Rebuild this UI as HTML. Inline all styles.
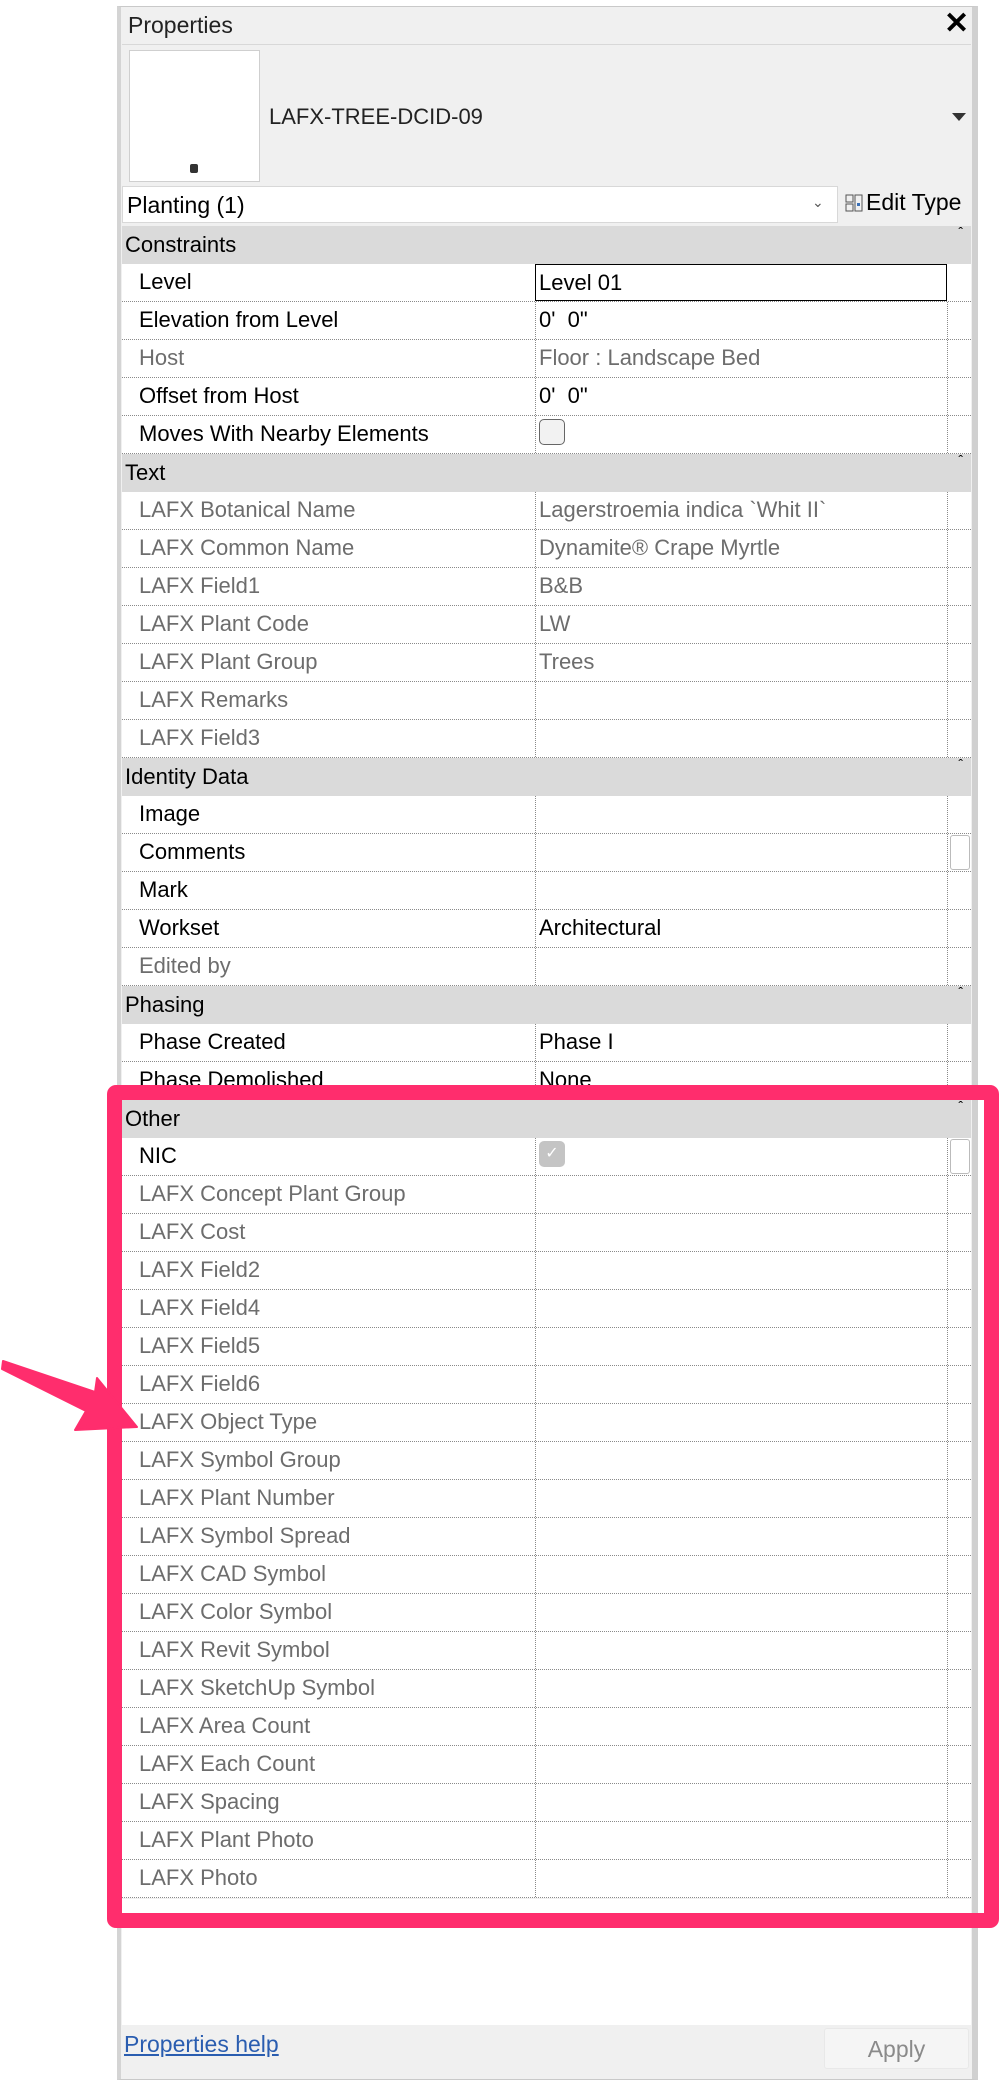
<!DOCTYPE html>
<html><head><meta charset="utf-8"><style>
*{margin:0;padding:0;box-sizing:border-box}
body{width:1000px;height:2082px;background:#fff;position:relative;overflow:hidden;font-family:"Liberation Sans",sans-serif;font-size:22px;color:#000}
.a{position:absolute}
#panel{left:117px;top:6px;width:861px;height:2074px;background:#f0f0f0;border:1px solid #c9c9c9;border-left:4px solid #d4d4d4;border-right:6px solid #d0d0d0}
.row{position:absolute;left:122px;width:849px;height:38px;background:#fff;border-bottom:1px dotted #8a8a8a}
.row .n{position:absolute;left:17px;top:5px;white-space:nowrap}
.row .v{position:absolute;left:413px;top:0;width:413px;height:37px;border-left:1px dotted #8a8a8a;border-right:1px dotted #8a8a8a;padding:5px 0 0 3px;white-space:nowrap}
.g{color:#6d6d6d}
.hd{position:absolute;left:122px;width:849px;height:38px;background:#dadada;padding:6px 0 0 3px}
.hd:after{content:"\02C6";position:absolute;right:8px;top:-2px;font-size:14px}
</style></head><body>
<div class="a" id="panel"></div>
<div class="a" style="left:128px;top:12px;font-size:23px;color:#222">Properties</div>
<div class="a" style="left:944px;top:6px;font-size:30px;font-weight:bold">✕</div>
<div class="a" style="left:122px;top:44px;width:849px;height:1px;background:#d8d8d8"></div>
<div class="a" style="left:129px;top:50px;width:131px;height:132px;background:#fff;border:1px solid #cfcfcf"></div>
<div class="a" style="left:190px;top:164px;width:8px;height:9px;background:#333;border-radius:2px"></div>
<div class="a" style="left:269px;top:104px;font-size:22px;color:#222">LAFX-TREE-DCID-09</div>
<div class="a" style="left:952px;top:113px;width:0;height:0;border-left:7px solid transparent;border-right:7px solid transparent;border-top:8px solid #333"></div>
<div class="a" style="left:122px;top:186px;width:716px;height:37px;background:#fff;border:1px solid #d8d8d8;padding:5px 0 0 4px;font-size:23px">Planting (1)</div>
<div class="a" style="left:812px;top:194px;font-size:14px;color:#555">&#8964;</div>
<svg class="a" style="left:845px;top:194px" width="18" height="18" viewBox="0 0 18 18"><rect x="1" y="1" width="7" height="7" fill="none" stroke="#555"/><rect x="1" y="10" width="7" height="7" fill="none" stroke="#555"/><rect x="10" y="1" width="7" height="16" fill="none" stroke="#555"/><rect x="12" y="9" width="3" height="3" fill="#3a6fb5"/></svg>
<div class="a" style="left:866px;top:189px;font-size:23px">Edit Type</div>

<div class="hd" style="top:226px">Constraints</div>
<div class="row" style="top:264px"><span class="n">Level</span><span class="v" style="border:1px solid #000;left:413px;width:412px">Level 01</span></div>
<div class="row" style="top:302px"><span class="n">Elevation from Level</span><span class="v">0'&nbsp;&nbsp;0"</span></div>
<div class="row g" style="top:340px"><span class="n">Host</span><span class="v">Floor : Landscape Bed</span></div>
<div class="row" style="top:378px"><span class="n">Offset from Host</span><span class="v">0'&nbsp;&nbsp;0"</span></div>
<div class="row" style="top:416px"><span class="n">Moves With Nearby Elements</span><span class="v"><span class="a" style="left:3px;top:3px;width:26px;height:26px;border:1.5px solid #666;border-radius:5px;background:#f2f2f2"></span></span></div>
<div class="hd" style="top:454px">Text</div>
<div class="row g" style="top:492px"><span class="n">LAFX Botanical Name</span><span class="v">Lagerstroemia indica `Whit II`</span></div>
<div class="row g" style="top:530px"><span class="n">LAFX Common Name</span><span class="v">Dynamite® Crape Myrtle</span></div>
<div class="row g" style="top:568px"><span class="n">LAFX Field1</span><span class="v">B&amp;B</span></div>
<div class="row g" style="top:606px"><span class="n">LAFX Plant Code</span><span class="v">LW</span></div>
<div class="row g" style="top:644px"><span class="n">LAFX Plant Group</span><span class="v">Trees</span></div>
<div class="row g" style="top:682px"><span class="n">LAFX Remarks</span><span class="v"></span></div>
<div class="row g" style="top:720px"><span class="n">LAFX Field3</span><span class="v"></span></div>
<div class="hd" style="top:758px">Identity Data</div>
<div class="row" style="top:796px"><span class="n">Image</span><span class="v"></span></div>
<div class="row" style="top:834px"><span class="n">Comments</span><span class="v"></span><span class="a" style="left:828px;top:1px;width:20px;height:35px;border:1px solid #bbb;border-radius:3px"></span></div>
<div class="row" style="top:872px"><span class="n">Mark</span><span class="v"></span></div>
<div class="row" style="top:910px"><span class="n">Workset</span><span class="v">Architectural</span></div>
<div class="row g" style="top:948px"><span class="n">Edited by</span><span class="v"></span></div>
<div class="hd" style="top:986px">Phasing</div>
<div class="row" style="top:1024px"><span class="n">Phase Created</span><span class="v">Phase I</span></div>
<div class="row" style="top:1062px"><span class="n">Phase Demolished</span><span class="v">None</span></div>
<div class="hd" style="top:1100px">Other</div>
<div class="row" style="top:1138px"><span class="n">NIC</span><span class="v"><span class="a" style="left:3px;top:3px;width:26px;height:26px;border-radius:5px;background:#c4c4c4;color:#fff;font-size:16px;text-align:center;line-height:26px">✓</span></span><span class="a" style="left:828px;top:1px;width:20px;height:35px;border:1px solid #bbb;border-radius:3px"></span></div>
<div class="row g" style="top:1176px"><span class="n">LAFX Concept Plant Group</span><span class="v"></span></div>
<div class="row g" style="top:1214px"><span class="n">LAFX Cost</span><span class="v"></span></div>
<div class="row g" style="top:1252px"><span class="n">LAFX Field2</span><span class="v"></span></div>
<div class="row g" style="top:1290px"><span class="n">LAFX Field4</span><span class="v"></span></div>
<div class="row g" style="top:1328px"><span class="n">LAFX Field5</span><span class="v"></span></div>
<div class="row g" style="top:1366px"><span class="n">LAFX Field6</span><span class="v"></span></div>
<div class="row g" style="top:1404px"><span class="n">LAFX Object Type</span><span class="v"></span></div>
<div class="row g" style="top:1442px"><span class="n">LAFX Symbol Group</span><span class="v"></span></div>
<div class="row g" style="top:1480px"><span class="n">LAFX Plant Number</span><span class="v"></span></div>
<div class="row g" style="top:1518px"><span class="n">LAFX Symbol Spread</span><span class="v"></span></div>
<div class="row g" style="top:1556px"><span class="n">LAFX CAD Symbol</span><span class="v"></span></div>
<div class="row g" style="top:1594px"><span class="n">LAFX Color Symbol</span><span class="v"></span></div>
<div class="row g" style="top:1632px"><span class="n">LAFX Revit Symbol</span><span class="v"></span></div>
<div class="row g" style="top:1670px"><span class="n">LAFX SketchUp Symbol</span><span class="v"></span></div>
<div class="row g" style="top:1708px"><span class="n">LAFX Area Count</span><span class="v"></span></div>
<div class="row g" style="top:1746px"><span class="n">LAFX Each Count</span><span class="v"></span></div>
<div class="row g" style="top:1784px"><span class="n">LAFX Spacing</span><span class="v"></span></div>
<div class="row g" style="top:1822px"><span class="n">LAFX Plant Photo</span><span class="v"></span></div>
<div class="row g" style="top:1860px"><span class="n">LAFX Photo</span><span class="v"></span></div>
<div class="a" style="left:122px;top:1899px;width:849px;height:126px;background:#fff"></div>

<div class="a" style="left:124px;top:2031px;font-size:23px;color:#2a5db0;text-decoration:underline">Properties help</div>
<div class="a" style="left:824px;top:2028px;width:145px;height:41px;background:#f5f5f5;border:1px solid #e8e8e8;border-radius:3px;text-align:center;padding-top:7px;font-size:23px;color:#8a8a8a">Apply</div>

<div class="a" style="left:107px;top:1085px;width:892px;height:843px;border:15px solid #ff2d6d;border-radius:9px"></div>
<svg class="a" style="left:0;top:1350px" width="150" height="90" viewBox="0 1350 150 90"><polygon points="3,1361 95,1392 97,1378 137,1427 75,1430 86,1411 2,1369" fill="#ff2d6d" stroke="#ff2d6d" stroke-linejoin="round" stroke-width="2"/></svg>
</body></html>
